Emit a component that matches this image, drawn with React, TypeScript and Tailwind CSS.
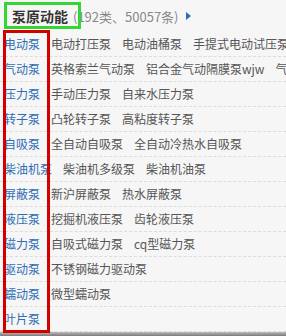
const rows: { label: string; items: string[] }[] = [
  { label: "电动泵", items: ["电动打压泵", "电动油桶泵", "手提式电动试压泵"] },
  { label: "气动泵", items: ["英格索兰气动泵", "铝合金气动隔膜泵wjw", "气动隔膜泵"] },
  { label: "压力泵", items: ["手动压力泵", "自来水压力泵"] },
  { label: "转子泵", items: ["凸轮转子泵", "高粘度转子泵"] },
  { label: "自吸泵", items: ["全自动自吸泵", "全自动冷热水自吸泵"] },
  { label: "柴油机泵", items: ["柴油机多级泵", "柴油机油泵"] },
  { label: "屏蔽泵", items: ["新沪屏蔽泵", "热水屏蔽泵"] },
  { label: "液压泵", items: ["挖掘机液压泵", "齿轮液压泵"] },
  { label: "磁力泵", items: ["自吸式磁力泵", "cq型磁力泵"] },
  { label: "驱动泵", items: ["不锈钢磁力驱动泵"] },
  { label: "蠕动泵", items: ["微型蠕动泵"] },
  { label: "叶片泵", items: [] },
];

const font = { fontFamily: '"Noto Sans CJK SC", "Liberation Sans", sans-serif' };

export default function App() {
  return (
    <div className="relative w-[286px] h-[336px] overflow-hidden bg-[#f6f6f6]" style={font}>
      <div className="flex items-center h-[32px] pl-[12px]">
        <span className="text-[14px] font-bold text-[#333] leading-none">泵原动能</span>
        <span className="ml-[5px] text-[13px] text-[#888] leading-none">(192类、50057条)</span>
        <span className="ml-[7px] w-0 h-0 border-y-[4px] border-y-transparent border-l-[5px] border-l-[#2a6ebb]" />
      </div>

      <div className="flex flex-col">
        {rows.map((row) => (
          <div
            key={row.label}
            className="flex items-center gap-[11px] h-[25px] pl-[4px] border-b border-dashed border-[#dcdcdc] whitespace-nowrap overflow-hidden text-[12px] leading-none"
          >
            <span className="text-[#2f6db5]">{row.label}</span>
            {row.items.map((item) => (
              <span key={item} className="text-[#555]">
                {item}
              </span>
            ))}
          </div>
        ))}
      </div>

      <div className="absolute left-0 right-0 bottom-0 h-[4px] bg-gradient-to-b from-[#bdbdbd] to-[#7a7a7a]" />

      {/* annotation boxes */}
      <div className="absolute left-[4px] top-[2px] w-[77px] h-[27px] border-[3px] border-[#33d633]" />
      <div className="absolute left-[3px] top-[30px] w-[47px] h-[303px] border-[3px] border-[#d40000]" />
    </div>
  );
}
